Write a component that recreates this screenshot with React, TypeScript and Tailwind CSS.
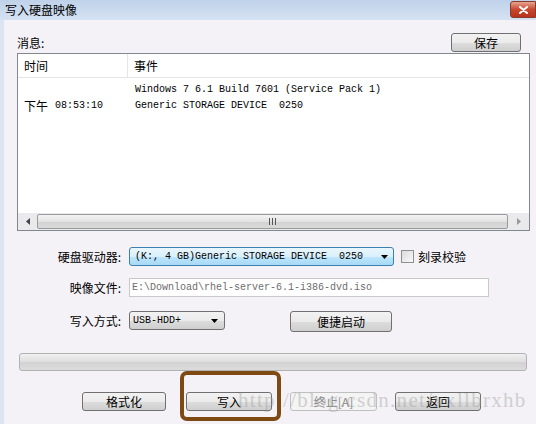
const cjk = "font-['SimSun','Noto_Sans_CJK_SC',sans-serif]";
const mono = "font-['Liberation_Mono','Noto_Sans_CJK_SC',monospace]";

function WinButton({ label, className = "", disabled = false }: { label: string; className?: string; disabled?: boolean }) {
  return (
    <div
      className={`flex items-center justify-center rounded-[3px] border text-[12px] leading-none ${cjk} ${
        disabled
          ? "border-[#bfbfbf] bg-[#f4f4f4] text-[#8a8a8a]"
          : "border-[#707070] bg-[linear-gradient(#f2f2f2_0%,#ebebeb_50%,#dddddd_51%,#cfcfcf_100%)] text-black"
      } ${className}`}
    >
      {label}
    </div>
  );
}

function Arrow() {
  return (
    <svg width="7" height="4" viewBox="0 0 7 4" className="shrink-0">
      <path d="M0 0h7L3.5 4z" fill="#000" />
    </svg>
  );
}

export default function App() {
  return (
    <div className={`relative h-[424px] w-[536px] overflow-hidden bg-[#f4f2f6] ${cjk}`}>
      {/* Title bar */}
      <div className="flex h-[20px] items-center justify-between bg-[linear-gradient(#bfd2ea,#d5e2f2)] pl-[5px]">
        <span className="text-[12px] leading-none text-black">写入硬盘映像</span>
        <div className="mb-[1px] flex h-[17px] w-[26px] items-center justify-center rounded-l-[3px] border border-[#8a3a2a] bg-[linear-gradient(#e8a593,#c8472e_50%,#b8321c)]">
          <svg width="9" height="8" viewBox="0 0 9 8">
            <path d="M1 1l7 6M8 1L1 7" stroke="#fff" strokeWidth="2" strokeLinecap="round" />
          </svg>
        </div>
      </div>

      <div className="flex h-[404px] border-l-4 border-[#dbe5f1]">
        <div className="flex flex-1 flex-col pl-[13px] pr-[6px]">
          {/* Messages header */}
          <div className="mt-[13px] flex h-[19px] items-end justify-between">
            <span className="mb-[3px] text-[12px] leading-none text-black">消息:</span>
            <WinButton label="保存" className="mr-[9px] h-[19px] w-[70px]" />
          </div>

          {/* List view */}
          <div className="mt-[1px] flex h-[178px] flex-col border border-[#828790] bg-white">
            <div className="flex h-[24px] border-b border-[#e5e5e5] text-[12px] leading-none text-black">
              <div className="flex w-[110px] items-center border-r border-[#e5e5e5] pl-[6px]">时间</div>
              <div className="flex items-center pl-[6px]">事件</div>
            </div>
            <div className="flex flex-1 flex-col pt-[4px]">
              <div className="flex h-[16px] items-center">
                <div className="w-[111px]" />
                <span className={`${mono} pl-[6px] text-[10px] leading-none text-black`}>
                  Windows 7 6.1 Build 7601 (Service Pack 1)
                </span>
              </div>
              <div className="flex h-[16px] items-center">
                <div className="flex w-[111px] items-center pl-[6px] text-[12px] leading-none text-black">
                  下午<span className={`${mono} ml-[7px] text-[10px]`}>08:53:10</span>
                </div>
                <span className={`${mono} whitespace-pre pl-[6px] text-[10px] leading-none text-black`}>
                  Generic STORAGE DEVICE  0250
                </span>
              </div>
            </div>
            {/* Horizontal scrollbar */}
            <div className="flex h-[17px] bg-[#eae9ec]">
              <div className="flex w-[19px] items-center justify-center">
                <svg width="4" height="7" viewBox="0 0 4 7">
                  <path d="M4 0v7L0 3.5z" fill="#444" />
                </svg>
              </div>
              <div className="my-[1px] flex flex-1 items-center justify-center rounded-[2px] border border-[#9a9a9a] bg-[linear-gradient(#f3f3f3,#e3e3e3_50%,#d2d2d2_51%,#dadada)]">
                <div className="flex gap-[2px]">
                  <div className="h-[7px] w-[1px] bg-[#555]" />
                  <div className="h-[7px] w-[1px] bg-[#555]" />
                  <div className="h-[7px] w-[1px] bg-[#555]" />
                </div>
              </div>
              <div className="flex w-[21px] items-center justify-center">
                <svg width="4" height="7" viewBox="0 0 4 7">
                  <path d="M0 0v7L4 3.5z" fill="#999" />
                </svg>
              </div>
            </div>
          </div>

          {/* Drive row */}
          <div className="mt-[16px] flex h-[19px] items-center">
            <div className="w-[105px] pr-[1px] text-right text-[12px] leading-none text-black">硬盘驱动器:</div>
            <div className="ml-[7px] flex h-[19px] w-[265px] items-center justify-between rounded-[3px] border border-[#3c7fb1] bg-[linear-gradient(#eaf6fd,#d9f0fc_50%,#bee6fd_51%,#a7d9f5)] pl-[5px] pr-[5px]">
              <span className={`${mono} whitespace-pre text-[10px] leading-none text-black`}>
                (K:, 4 GB)Generic STORAGE DEVICE  0250
              </span>
              <Arrow />
            </div>
            <div className="ml-[7px] h-[13px] w-[13px] border border-[#8e8f8f] bg-[linear-gradient(135deg,#dcdcdc,#f8f8f8)]" />
            <span className="ml-[4px] text-[12px] leading-none text-black">刻录校验</span>
          </div>

          {/* Image file row */}
          <div className="mt-[12px] flex h-[19px] items-center">
            <div className="w-[105px] pr-[1px] text-right text-[12px] leading-none text-black">映像文件:</div>
            <div className="ml-[7px] flex h-[19px] w-[360px] items-center border border-[#c9c9c9] bg-white pl-[2px]">
              <span className={`${mono} text-[10px] leading-none text-[#6d6d6d]`}>
                E:\Download\rhel-server-6.1-i386-dvd.iso
              </span>
            </div>
          </div>

          {/* Write mode row */}
          <div className="mt-[14px] flex h-[21px] items-start">
            <div className="flex h-[19px] w-[105px] items-center justify-end pr-[1px] text-[12px] leading-none text-black">写入方式:</div>
            <div className="ml-[7px] flex h-[19px] w-[96px] items-center justify-between rounded-[3px] border border-[#707070] bg-[linear-gradient(#f2f2f2,#ebebeb_50%,#dddddd_51%,#cfcfcf)] pl-[3px] pr-[6px]">
              <span className={`${mono} text-[10px] leading-none text-black`}>USB-HDD+</span>
              <Arrow />
            </div>
            <WinButton label="便捷启动" className="ml-[65px] h-[21px] w-[102px]" />
          </div>

          {/* Progress bar */}
          <div className="ml-[2px] mr-[3px] mt-[21px] h-[18px] rounded-[3px] border border-[#b2b2b2] bg-[linear-gradient(#f0f0f0,#dedede_50%,#d2d2d2_51%,#dcdcdc)]" />

          {/* Bottom buttons */}
          <div className="mt-[21px] flex h-[19px] pl-[65px]">
            <WinButton label="格式化" className="h-[19px] w-[84px]" />
            <WinButton label="写入" className="ml-[20px] h-[19px] w-[86px]" />
            <WinButton label="终止[A]" disabled className="ml-[18px] h-[19px] w-[87px]" />
            <WinButton label="返回" className="ml-[18px] h-[19px] w-[86px]" />
          </div>
        </div>
      </div>

      {/* Watermark */}
      <div className="pointer-events-none absolute left-[238px] top-[390px] whitespace-nowrap font-['Liberation_Serif',serif] text-[21px] leading-none tracking-[1.3px] text-[#9a9a9a] opacity-40">
        http://blog.csdn.net/xxllbrxhb
      </div>

      {/* Annotation frame */}
      <div className="pointer-events-none absolute left-[180px] top-[371px] h-[50px] w-[101px] rounded-[7px] border-[4px] border-[#7c4a12]" />
    </div>
  );
}
